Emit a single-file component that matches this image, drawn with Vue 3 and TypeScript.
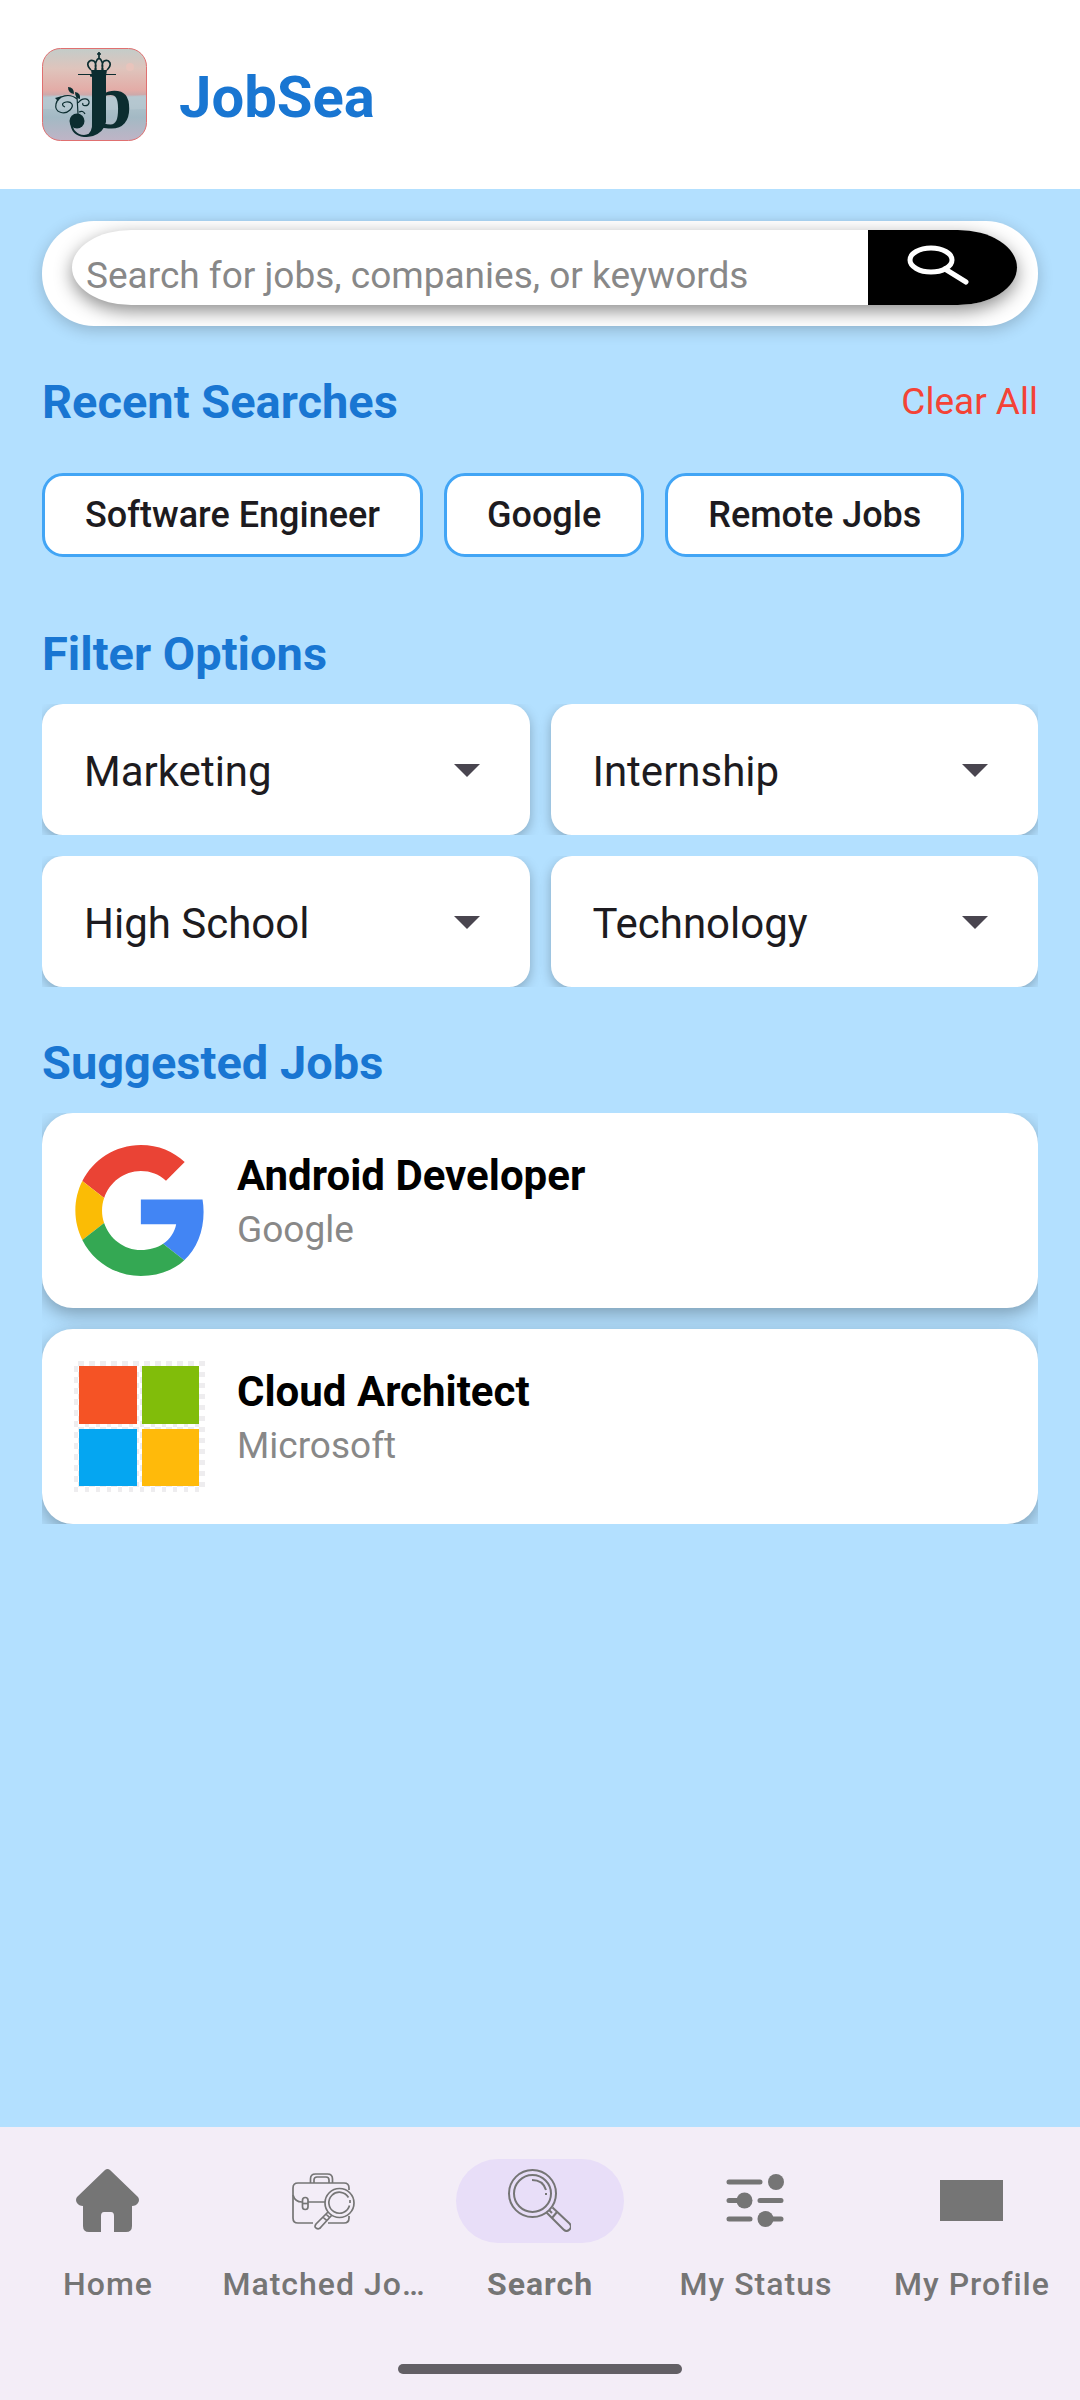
<script setup lang="ts">
import { ref } from 'vue'

interface Filter {
  id: string
  label: string
  value: string
  options: string[]
}

interface Job {
  title: string
  company: string
  logo: 'google' | 'microsoft'
}

interface NavItem {
  id: string
  label: string
}

const query = ref('')
const recent = ref<string[]>(['Software Engineer', 'Google', 'Remote Jobs'])

const filterRows = ref<Filter[][]>([
  [
    { id: 'field', label: 'Field', value: 'Marketing', options: ['Marketing', 'Design', 'Finance'] },
    { id: 'type', label: 'Job type', value: 'Internship', options: ['Internship', 'Full-time', 'Part-time'] },
  ],
  [
    { id: 'education', label: 'Education', value: 'High School', options: ['High School', 'Bachelor', 'Master'] },
    { id: 'industry', label: 'Industry', value: 'Technology', options: ['Technology', 'Healthcare', 'Retail'] },
  ],
])

const jobs: Job[] = [
  { title: 'Android Developer', company: 'Google', logo: 'google' },
  { title: 'Cloud Architect', company: 'Microsoft', logo: 'microsoft' },
]

const navItems: NavItem[] = [
  { id: 'home', label: 'Home' },
  { id: 'matched', label: 'Matched Jo…' },
  { id: 'search', label: 'Search' },
  { id: 'status', label: 'My Status' },
  { id: 'profile', label: 'My Profile' },
]
const active = ref('search')
</script>

<template>
  <div class="app">
    <header class="header">
      <svg class="brand-logo" viewBox="0 0 105 93" aria-hidden="true">
        <defs>
          <linearGradient id="sky" x1="0" y1="0" x2="0" y2="1">
            <stop offset="0" stop-color="#c3ccc9" />
            <stop offset="0.22" stop-color="#dfc4bc" />
            <stop offset="0.45" stop-color="#e3aca7" />
            <stop offset="0.5" stop-color="#cfa9aa" />
            <stop offset="0.53" stop-color="#b3c6cf" />
            <stop offset="0.75" stop-color="#a3b9c4" />
            <stop offset="1" stop-color="#bfb4c6" />
          </linearGradient>
        </defs>
        <rect x="0.5" y="0.5" width="104" height="92" rx="18" fill="url(#sky)" stroke="#e07070" />
        <path d="M1 50q20-5 42-2t61-1v14q-30 1-52 1T1 61z" fill="#b9cad2" opacity="0.6" />
        <circle cx="88" cy="19" r="4" fill="#e8c4bc" />
        <g fill="none" stroke="#0c2d30">
          <path d="M36 26.500h38" stroke-width="1" />
          <path d="M49 22q-4-4-3-7 2-4 6-2 3 3 1 9M54 22q-2-9 3-12 5 3 3 12M65 22q4-4 3-7-2-4-6-2-3 3-1 9M57 4v6M55 6h4" stroke-width="1.700" />
          <path d="M58 76q-5 12-16 12-12-1-13-14" stroke-width="2" />
          <path d="M35 48l1 18M35 51c-7-6-19-4-21 5s9 11 14 6 1-9-4-8-4 4-1 5M36 55c5-7 12-4 11 0s-8 3-6 0M37 64q4-2 6 2" stroke-width="1.200" />
        </g>
        <g fill="#0c2d30">
          <path d="M49 22h16l-1 6H50zM50 26h14v48q-2 10-13 14-6 1-8 0 8-3 7-14z" />
          <circle cx="35" cy="73" r="7.500" />
          <path d="M26 39q6 0 6 7-6-1-6-7zM33 44q6 1 5 7-5-1-5-7zM13 50l7-2-4 5z" />
          <text class="mono" x="47" y="80">b</text>
        </g>
      </svg>
      <h1 class="brand">JobSea</h1>
    </header>

    <main class="content">
      <form class="search" role="search" @submit.prevent>
        <div class="search-inner">
          <input
            v-model="query"
            class="search-input"
            type="text"
            aria-label="Search for jobs, companies, or keywords"
            placeholder="Search for jobs, companies, or keywords"
          />
          <button class="search-button" type="submit" aria-label="Search">
            <svg width="64" height="40" viewBox="0 0 64 40" fill="none" stroke="#fff" aria-hidden="true">
              <ellipse cx="25" cy="15" rx="21" ry="12" stroke-width="5" />
              <path d="M39 24l21 13" stroke-width="5" stroke-linecap="round" />
            </svg>
          </button>
        </div>
      </form>

      <section class="section">
        <div class="section-head">
          <h2 class="heading">Recent Searches</h2>
          <button class="clear" type="button" @click="recent = []">Clear All</button>
        </div>
        <div class="chips">
          <button v-for="term in recent" :key="term" class="chip" type="button" @click="query = term">
            {{ term }}
          </button>
        </div>
      </section>

      <section class="section">
        <h2 class="heading">Filter Options</h2>
        <div class="filters">
          <div v-for="(row, i) in filterRows" :key="i" class="filter-row">
            <div v-for="filter in row" :key="filter.id" class="filter">
              <select :id="filter.id" v-model="filter.value" class="filter-select" :aria-label="filter.label">
                <option v-for="option in filter.options" :key="option">{{ option }}</option>
              </select>
              <svg class="filter-arrow" width="26" height="13" viewBox="0 0 26 13" aria-hidden="true">
                <path d="M0 0h26L13 13z" fill="#49454f" />
              </svg>
            </div>
          </div>
        </div>
      </section>

      <section class="section">
        <h2 class="heading">Suggested Jobs</h2>
        <div class="jobs">
          <article v-for="job in jobs" :key="job.title" class="job">
            <svg v-if="job.logo === 'google'" class="job-logo" viewBox="-0.5 0 48 48" aria-hidden="true">
              <path fill="#ea4335" d="M24 9.500c3.540 0 6.710 1.220 9.210 3.600l6.850-6.850C35.900 2.380 30.470 0 24 0 14.620 0 6.510 5.380 2.560 13.220l7.980 6.190C12.430 13.720 17.740 9.500 24 9.500z" />
              <path fill="#4285f4" d="M46.980 24.550c0-1.570-.15-3.090-.38-4.550H24v9.020h12.940c-.58 2.960-2.260 5.480-4.780 7.180l7.730 6c4.510-4.180 7.090-10.360 7.090-17.650z" />
              <path fill="#fbbc05" d="M10.530 28.590c-.48-1.450-.76-2.990-.76-4.590s.27-3.140.76-4.590l-7.980-6.190C.92 16.460 0 20.120 0 24c0 3.880.92 7.540 2.560 10.780l7.970-6.190z" />
              <path fill="#34a853" d="M24 48c6.480 0 11.930-2.130 15.890-5.810l-7.730-6c-2.150 1.450-4.920 2.300-8.160 2.300-6.260 0-11.570-4.220-13.470-9.910l-7.980 6.190C6.510 42.620 14.620 48 24 48z" />
            </svg>
            <svg v-else class="job-logo" viewBox="0 0 131 131" aria-hidden="true">
              <defs>
                <pattern id="checks" width="11" height="11" patternUnits="userSpaceOnUse">
                  <rect width="11" height="11" fill="#fff" />
                  <path d="M4 0h6v5H4zM0 5h4v6H0z" fill="#eeedef" />
                </pattern>
              </defs>
              <rect width="131" height="131" fill="url(#checks)" />
              <rect x="5" y="5" width="58" height="58" fill="#f55325" />
              <rect x="68" y="5" width="57" height="58" fill="#81bd0a" />
              <rect x="5" y="68" width="58" height="57" fill="#05a6f1" />
              <rect x="68" y="68" width="57" height="57" fill="#ffba0a" />
            </svg>
            <div class="job-text">
              <h3 class="job-title">{{ job.title }}</h3>
              <p class="job-company">{{ job.company }}</p>
            </div>
          </article>
        </div>
      </section>
    </main>

    <footer class="bottom">
      <nav class="nav" aria-label="Main">
        <a
          v-for="item in navItems"
          :key="item.id"
          class="nav-item"
          :class="{ active: item.id === active }"
          :href="'#' + item.id"
          @click="active = item.id"
        >
          <span class="nav-pill">
            <svg class="nav-icon" viewBox="0 0 63 63" aria-hidden="true">
              <path
                v-if="item.id === 'home'"
                fill="#757575"
                d="M29 1q2.500-2 5 0l28 27q2 3 0 6-2 3-6 3v20q0 6-6 6H38V47q0-4-3-4h-7q-3 0-3 4v16H13q-6 0-6-6V37q-4 0-6-3-2-3 0-6z"
              />
              <g v-else-if="item.id === 'matched'" fill="none" stroke="#757575" stroke-width="1.700">
                <path d="M21 54H6q-5 0-5-5V19q0-5 5-5h46q5 0 5 5v2M57 47v2q0 5-5 5H36" />
                <path d="M18.500 14v-4q0-5 5-5h12q5 0 5 5v4M22 14v-3q0-3 3-3h9q3 0 3 3v3M1 26q2 7 9 7M16 33h17" />
                <rect x="10.500" y="28.500" width="5.500" height="12" rx="2.700" />
                <path d="M10.500 34.500H16" />
                <circle cx="47.500" cy="34" r="14.500" />
                <path d="M56.500 28.500a10.500 10.500 0 1 0 1 8M58 31v3" />
                <path d="M36 43l-12 12q-2 3 0 4 3 2 5-1l11-12M31 48l4 4M34 45l4 4" />
              </g>
              <g v-else-if="item.id === 'search'" fill="none" stroke="#757575" stroke-width="2">
                <circle cx="24.500" cy="24.500" r="23.500" />
                <circle cx="24.500" cy="24.500" r="18.500" />
                <path d="M24 11q11 0 14 10M38 24v2" />
                <path d="M38.500 43.500l17 17q3 3 6 0t0-6l-17-16M44 49l5-6M41 41l3 3" />
              </g>
              <g v-else-if="item.id === 'status'" stroke="#757575" stroke-width="5" stroke-linecap="round">
                <path d="M5 13h31M5 31.500h15M36 31.500h21M5 50h21M41 50h16" />
                <g fill="#757575" stroke="none">
                  <circle cx="52" cy="13" r="8" />
                  <circle cx="20.500" cy="31.500" r="8" />
                  <circle cx="41.500" cy="50" r="8" />
                </g>
              </g>
              <rect v-else y="11" width="63" height="41" fill="#757575" />
            </svg>
          </span>
          <span class="nav-label">{{ item.label }}</span>
        </a>
      </nav>
      <div class="handle"></div>
    </footer>
  </div>
</template>

<style>
body {
  margin: 0;
}
</style>

<style scoped>
.app {
  display: flex;
  flex-direction: column;
  min-height: 100vh;
  background: #b3e0ff;
  color: #1d1b20;
  font-family: Roboto, 'Liberation Sans', sans-serif;
}

h1,
h2,
h3,
p {
  margin: 0;
}

button,
input,
select {
  border: 0;
  padding: 0;
  font-family: inherit;
  color: inherit;
}

.header {
  display: flex;
  align-items: center;
  gap: 32px;
  padding: 48px 42px;
  background: #fff;
}

.brand-logo {
  width: 105px;
  height: 93px;
  overflow: visible;
}

.mono {
  font-family: 'Liberation Serif', serif;
  font-weight: 700;
  font-size: 78px;
}

.brand {
  padding-top: 4px;
  font-size: 58px;
  line-height: 68px;
  font-weight: 700;
  color: #1976d2;
}

.content {
  flex: 1;
  display: flex;
  flex-direction: column;
  gap: 48px;
  padding: 32px 42px;
}

.search {
  padding: 9px 21px 21px 30px;
  border-radius: 52px;
  background: #fff;
  box-shadow: 0 4px 16px rgba(0, 0, 0, 0.2);
}

.search-inner {
  display: flex;
  height: 75px;
  border-radius: 60px / 38px;
  background: #fff;
  box-shadow: 0 6px 18px rgba(0, 0, 0, 0.45);
}

.search-input {
  flex: 1;
  min-width: 0;
  padding: 16px 12px 0 14px;
  border-radius: 60px 0 0 60px / 38px 0 0 38px;
  background: transparent;
  font-size: 37px;
  outline: 0;
}

.search-input::placeholder {
  color: #888;
  opacity: 1;
}

.search-button {
  display: flex;
  justify-content: center;
  width: 149px;
  padding-top: 15px;
  padding-right: 10px;
  border-radius: 0 60px 60px 0 / 0 38px 38px 0;
  background: #000;
}

.section-head {
  display: flex;
  justify-content: space-between;
  align-items: center;
}

.heading {
  margin-bottom: 22px;
  font-size: 47px;
  line-height: 56px;
  font-weight: 700;
  color: #1976d2;
}

.clear {
  margin-bottom: 22px;
  background: none;
  font-size: 37px;
  line-height: 56px;
  color: #f44336;
}

.chips {
  display: flex;
  flex-wrap: wrap;
  gap: 21px;
  min-height: 84px;
  padding: 21px 0;
}

.chip {
  height: 84px;
  padding: 0 40px;
  border: 3px solid #42a5f5;
  border-radius: 21px;
  background: #fff;
  font-size: 36px;
  font-weight: 500;
}

.filters {
  display: flex;
  flex-direction: column;
  gap: 21px;
}

.filter-row {
  display: grid;
  grid-template-columns: 1fr 1fr;
  gap: 21px;
  overflow: hidden;
}

.filter {
  display: grid;
  align-items: center;
  height: 131px;
  border-radius: 21px;
  background: #fff;
  box-shadow: 0 4px 12px rgba(0, 0, 0, 0.25);
}

.filter-select {
  grid-area: 1 / 1;
  width: 100%;
  height: 100%;
  padding: 4px 84px 0 42px;
  border-radius: 21px;
  appearance: none;
  background: transparent;
  font-size: 42px;
}

.filter-arrow {
  grid-area: 1 / 1;
  justify-self: end;
  margin-top: 2px;
  margin-right: 50px;
  pointer-events: none;
}

.jobs {
  display: flex;
  flex-direction: column;
  gap: 21px;
  overflow: hidden;
}

.job {
  display: flex;
  gap: 32px;
  padding: 32px;
  border-radius: 31px;
  background: #fff;
  box-shadow: 0 6px 18px rgba(0, 0, 0, 0.3);
}

.job-logo {
  width: 131px;
  height: 131px;
}

.job-text {
  padding-top: 4px;
}

.job-title {
  font-size: 42px;
  line-height: 54px;
  font-weight: 700;
  color: #000;
}

.job-company {
  font-size: 37px;
  line-height: 54px;
  color: #888;
}

.bottom {
  padding: 32px 0 26px;
  background: #f3edf7;
}

.nav {
  display: grid;
  grid-template-columns: repeat(5, minmax(0, 1fr));
}

.nav-item {
  display: flex;
  flex-direction: column;
  align-items: center;
  gap: 23px;
  color: #757575;
  text-decoration: none;
}

.nav-pill {
  box-sizing: border-box;
  width: 168px;
  height: 84px;
  padding: 10px 52px;
  border-radius: 42px;
}

.active .nav-pill {
  background: #e8def8;
}

.nav-icon {
  display: block;
  width: 63px;
  height: 63px;
}

.nav-label {
  white-space: nowrap;
  font-size: 32px;
  line-height: 36px;
  font-weight: 500;
  letter-spacing: 1px;
}

.active .nav-label {
  font-weight: 700;
}

.handle {
  width: 284px;
  height: 10px;
  margin: 62px auto 0;
  border-radius: 5px;
  background: #625f65;
}
</style>
